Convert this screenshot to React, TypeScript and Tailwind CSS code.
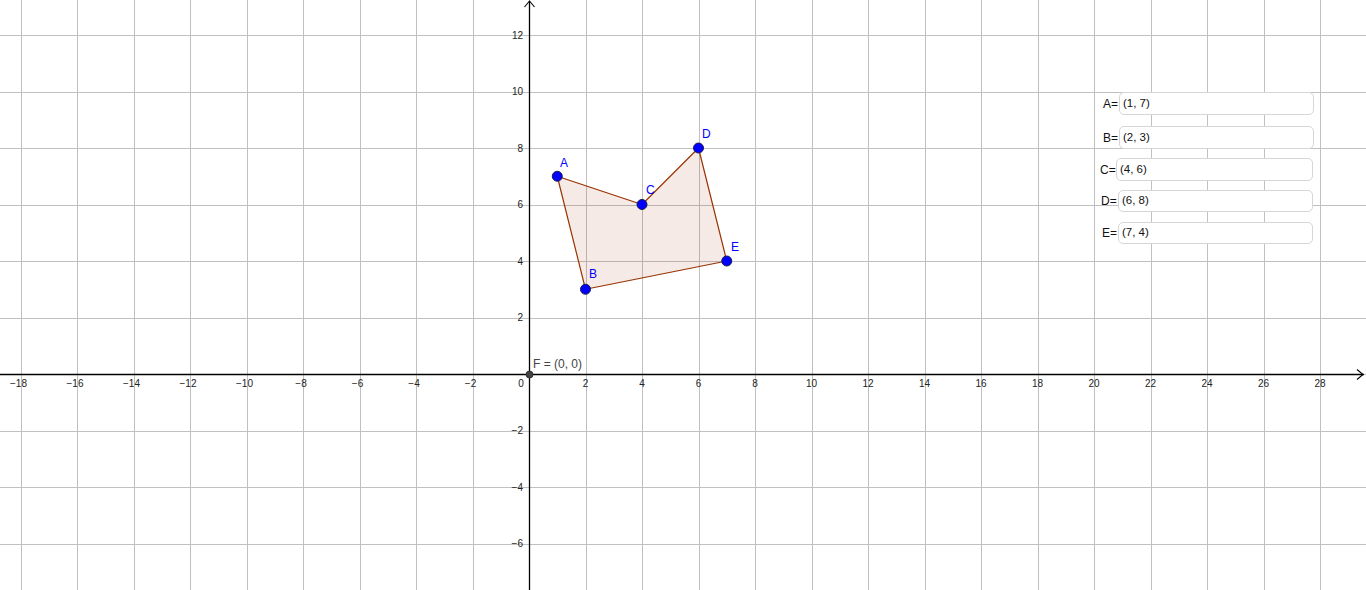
const ORIGIN_X = 529;
const ORIGIN_Y = 374;
const UNIT = 28.25;

const px = (x: number) => ORIGIN_X + x * UNIT;
const py = (y: number) => ORIGIN_Y - y * UNIT;

const points = [
  { name: "A", x: 1, y: 7, lx: 560, ly: 167 },
  { name: "B", x: 2, y: 3, lx: 589, ly: 278 },
  { name: "C", x: 4, y: 6, lx: 646, ly: 194 },
  { name: "D", x: 6, y: 8, lx: 702, ly: 138 },
  { name: "E", x: 7, y: 4, lx: 731, ly: 251 },
];

const polygon = ["A", "C", "D", "E", "B"]
  .map((n) => points.find((p) => p.name === n)!)
  .map((p) => `${px(p.x)},${py(p.y)}`)
  .join(" ");

const xTicks = Array.from({ length: 24 }, (_, i) => -18 + i * 2);
const yTicks = [-6, -4, -2, 2, 4, 6, 8, 10, 12];

// input boxes in the graphics view, they sit a little unevenly like the original
const fields = [
  { label: "A=", value: "(1, 7)", row: "mt-0 pl-[3px]", lab: "w-[16px]", box: "w-[195px] h-[23px]" },
  { label: "B=", value: "(2, 3)", row: "mt-[11px] pl-[3px]", lab: "w-[16px]", box: "w-[195px] h-[23px]" },
  { label: "C=", value: "(4, 6)", row: "mt-[9px] pl-0", lab: "w-[16px]", box: "w-[197px] h-[23px]" },
  { label: "D=", value: "(6, 8)", row: "mt-[9px] pl-[1px]", lab: "w-[17px]", box: "w-[195px] h-[22px]" },
  { label: "E=", value: "(7, 4)", row: "mt-[10px] pl-[2px]", lab: "w-[16px]", box: "w-[195px] h-[22px]" },
];

const fmt = (n: number) => (n < 0 ? `\u2212${Math.abs(n)}` : `${n}`);

function Graph() {
  return (
    <svg width={1366} height={590} className="absolute inset-0 font-['Liberation_Sans',Arial,sans-serif]">
      {/* grid */}
      {Array.from({ length: 26 }, (_, i) => -20 + i * 2).map((g) => (
        <line key={`gx${g}`} x1={Math.round(px(g)) + 0.5} y1={0} x2={Math.round(px(g)) + 0.5} y2={590} stroke="#c0c0c0" strokeWidth={1} />
      ))}
      {Array.from({ length: 12 }, (_, i) => -8 + i * 2).map((g) => (
        <line key={`gy${g}`} x1={0} y1={Math.round(py(g)) + 0.5} x2={1366} y2={Math.round(py(g)) + 0.5} stroke="#c0c0c0" strokeWidth={1} />
      ))}

      {/* polygon */}
      <polygon points={polygon} fill="#993300" fillOpacity={0.1} stroke="#993300" strokeWidth={1.2} strokeLinejoin="round" />

      {/* axes */}
      <line x1={0} y1={ORIGIN_Y + 0.5} x2={1364} y2={ORIGIN_Y + 0.5} stroke="#000" strokeWidth={1.3} />
      <line x1={ORIGIN_X + 0.5} y1={1} x2={ORIGIN_X + 0.5} y2={590} stroke="#000" strokeWidth={1.3} />
      <polyline points="1357,369.5 1363,374.5 1357,379.5" fill="none" stroke="#000" strokeWidth={1.1} />
      <polyline points="524.5,7 529.5,1 534.5,7" fill="none" stroke="#000" strokeWidth={1.1} />

      {/* tick labels */}
      {xTicks.map((t) =>
        t === 0 ? null : (
          <text key={`tx${t}`} x={px(t) - (t < 0 ? 2 : 0)} y={387} fontSize={10} textAnchor="middle" fill="#222">
            {fmt(t)}
          </text>
        )
      )}
      <text x={521} y={387} fontSize={10} textAnchor="middle" fill="#222">
        0
      </text>
      {yTicks.map((t) => (
        <text key={`ty${t}`} x={523} y={py(t) + 3.5} fontSize={10} textAnchor="end" fill="#222">
          {fmt(t)}
        </text>
      ))}

      {/* origin point F */}
      <circle cx={ORIGIN_X + 0.5} cy={ORIGIN_Y + 0.5} r={3.5} fill="#444" stroke="#222" strokeWidth={0.8} />
      <text x={533} y={368} fontSize={12} fill="#444">
        F = (0, 0)
      </text>

      {/* points */}
      {points.map((p) => (
        <g key={p.name}>
          <circle cx={px(p.x)} cy={py(p.y)} r={5} fill="#0000ff" stroke="#1a1a4d" strokeWidth={1} />
          <text x={p.lx} y={p.ly} fontSize={12} fill="#0000ff">
            {p.name}
          </text>
        </g>
      ))}
    </svg>
  );
}

export default function App() {
  return (
    <div className="relative w-[1366px] h-[590px] overflow-hidden bg-white font-['Liberation_Sans',Arial,sans-serif]">
      <Graph />
      <div className="absolute left-[1100px] top-[92px] flex flex-col">
        {fields.map((f) => (
          <div key={f.label} className={`flex items-center ${f.row}`}>
            <span className={`${f.lab} text-[12px] leading-none text-[#111]`}>{f.label}</span>
            <div className={`${f.box} flex items-center pl-[3px] rounded-[5px] border border-[#d6d6d6] bg-white text-[11.5px] text-[#111]`}>
              {f.value}
            </div>
          </div>
        ))}
      </div>
    </div>
  );
}
